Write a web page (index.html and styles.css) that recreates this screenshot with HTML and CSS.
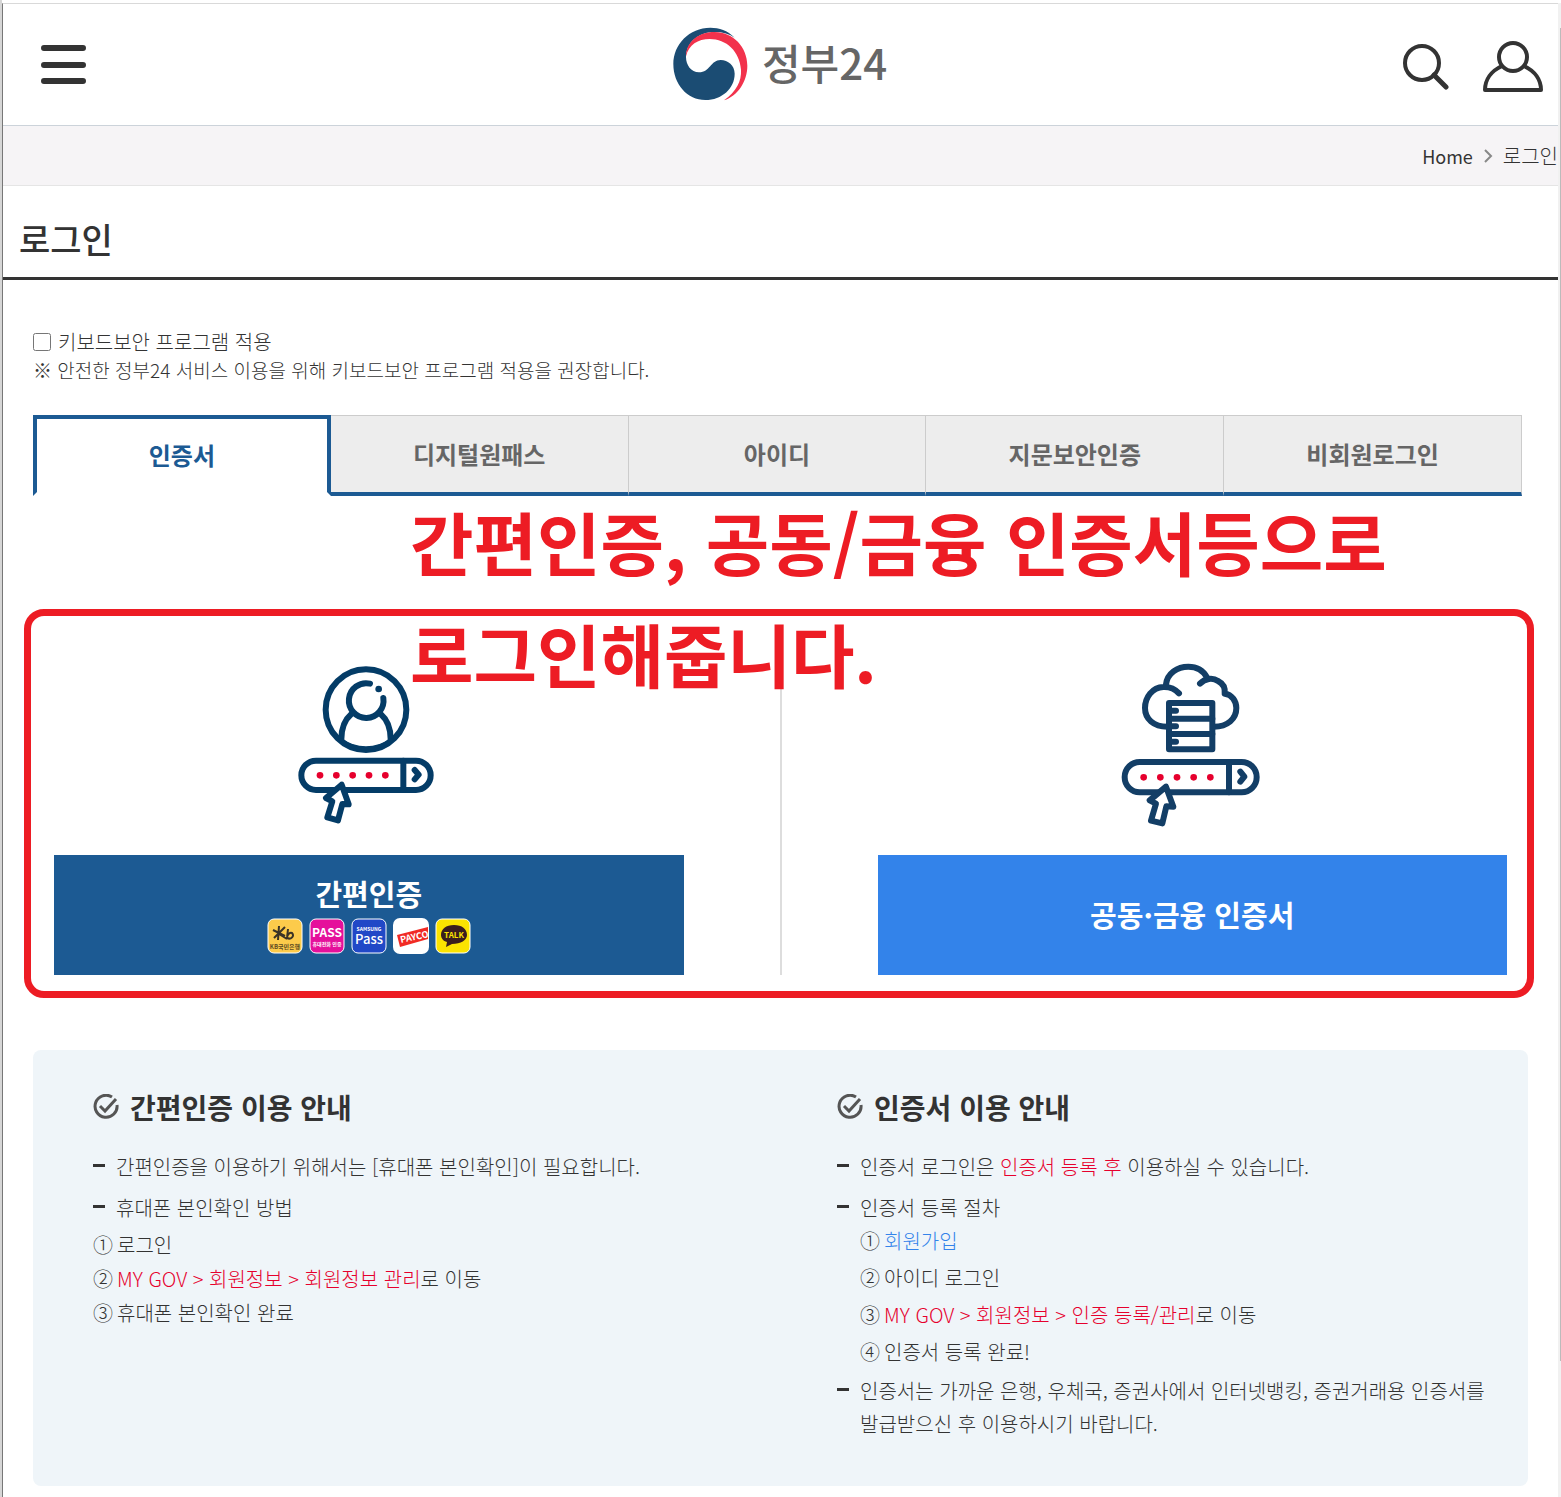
FILE: index.html
```html
<!DOCTYPE html>
<html lang="ko">
  <head>
    <meta charset="UTF-8" />
    <meta name="viewport" content="width=device-width, initial-scale=1.0" />
    <title>로그인 | 정부24</title>
    <link rel="stylesheet" href="styles.css">
  </head>
  <body>
    <div class="window">
      <div class="page">
        <header class="header">
          <button class="icon-button menu-button" type="button" aria-label="전체메뉴">
            <svg width="46" height="40" viewBox="0 0 46 40">
              <path d="M3 3H42M3 20H42M3 36H42" stroke="#333" stroke-width="6" stroke-linecap="round" />
            </svg>
          </button>
          <a class="logo" href="#">
            <svg width="75" height="74" viewBox="65 52 225 222">
              <path fill="#1b4c73" d="M250 84C228 62 204 54 177 54C114 54 66 104 66 163C66 224 108 271 162 271C212 271 250 236 250 192C250 167 230 151 208 151C178 151 176 188 143 188C119 188 104 166 104 143C104 100 140 67 190 67C215 67 235 73 250 84Z" />
              <path fill="#f2324c" d="M104 140C104 98 140 67 190 67C245 67 288 112 288 168C288 215 260 258 218 272C255 245 271 215 269 180C265 125 225 88 175 88C140 88 112 105 104 140Z" />
            </svg>
            <span class="logo-text">정부24</span>
          </a>
          <div class="header-tools">
            <button class="icon-button" type="button" aria-label="검색">
              <svg width="46" height="48" viewBox="0 0 46 48" fill="none" stroke="#333">
                <circle cx="19" cy="20" r="17" stroke-width="4" />
                <path d="M31 32L43 44" stroke-width="5" stroke-linecap="round" />
              </svg>
            </button>
            <button class="icon-button" type="button" aria-label="로그인">
              <svg width="60" height="52" viewBox="0 0 60 52" fill="none" stroke="#333" stroke-width="4" stroke-linejoin="round">
                <circle cx="30" cy="16" r="14" />
                <path d="M19 25C8 30 2 39 2 49H58C58 39 52 30 41 25" />
              </svg>
            </button>
          </div>
        </header>
        <nav class="breadcrumb">
          <a class="home" href="#">Home</a>
          <svg width="10" height="14" viewBox="0 0 10 14" fill="none" stroke="#888" stroke-width="2">
            <path d="M2 1L8 7L2 13" />
          </svg>
          <span>로그인</span>
        </nav>
        <h1 class="title">로그인</h1>

        <main class="content">
          <div class="security">
            <input class="checkbox" type="checkbox" id="keyboard-security" />
            <label for="keyboard-security">키보드보안 프로그램 적용</label>
          </div>
          <p class="security-note">※ 안전한 정부24 서비스 이용을 위해 키보드보안 프로그램 적용을 권장합니다.</p>

          <div class="tabs" role="tablist">
            <button class="tab active" type="button" role="tab" aria-selected="true">인증서</button>
            <button class="tab" type="button" role="tab">디지털원패스</button>
            <button class="tab" type="button" role="tab">아이디</button>
            <button class="tab" type="button" role="tab">지문보안인증</button>
            <button class="tab" type="button" role="tab">비회원로그인</button>
          </div>

          <section class="methods">
            <div class="method">
              <svg width="170" height="190" viewBox="12 0 510 570" fill="none" stroke="#043c67" stroke-width="18" stroke-linecap="round" stroke-linejoin="round">
                <circle cx="258" cy="179" r="121" />
                <path d="M270 101A52 52 0 1 0 310 144" />
                <circle cx="296" cy="117" r="10" fill="#043c67" stroke="none" />
                <path d="M214 192C192 211 184 236 184 268M302 192C324 211 332 236 332 268" />
                <path d="M184 270C225 303 291 303 332 270" stroke-width="12" />
                <rect x="64" y="332" width="388" height="88" rx="44" />
                <path d="M370 332V420M404 360L416 374L404 388" />
                <g fill="#e6002d" stroke="none">
                  <circle cx="120" cy="376" r="10" />
                  <circle cx="169" cy="376" r="10" />
                  <circle cx="218" cy="376" r="10" />
                  <circle cx="267" cy="376" r="10" />
                  <circle cx="316" cy="376" r="10" />
                </g>
                <path fill="#fff" stroke-width="18" d="M185 404L138 444L157 454L142 502L174 511L187 462L206 463Z" />
              </svg>
              <button class="method-button simple" type="button">
                <span>간편인증</span>
                <span class="badges">
                  <svg width="36" height="36" viewBox="0 0 36 36">
                    <rect x="1" y="1" width="34" height="34" rx="6" fill="#fccb4b" stroke="#fff" />
                    <path d="M12 8L11 22M6 12L18 18M18 9L7 20M12 16L20 21M21 11L20 20C24 22 28 18 25 15C23 14 21 16 20 19" fill="none" stroke="#3b3426" stroke-width="2" />
                    <text x="18" y="31" font-size="6" font-weight="700" fill="#5c4a22" text-anchor="middle">KB국민은행</text>
                  </svg>
                  <svg width="36" height="36" viewBox="0 0 36 36">
                    <rect x="1" y="1" width="34" height="34" rx="6" fill="#e5109b" stroke="#fff" />
                    <text x="18" y="19" font-size="12" font-weight="700" fill="#fff" text-anchor="middle">PASS</text>
                    <text x="18" y="28" font-size="5" font-weight="700" fill="#fff" text-anchor="middle">휴대전화 인증</text>
                  </svg>
                  <svg width="36" height="36" viewBox="0 0 36 36">
                    <rect x="1" y="1" width="34" height="34" rx="6" fill="#2148c7" stroke="#fff" />
                    <text x="18" y="13" font-size="5" font-weight="700" fill="#fff" text-anchor="middle">SAMSUNG</text>
                    <text x="18" y="26" font-size="13" font-weight="500" fill="#fff" text-anchor="middle">Pass</text>
                  </svg>
                  <svg width="36" height="36" viewBox="0 0 36 36">
                    <rect width="36" height="36" rx="7" fill="#fff" />
                    <path d="M4 17L35 9V21L7 29Z" fill="#f12a24" />
                    <text x="8" y="25" font-size="9" font-weight="700" fill="#fff" transform="rotate(-12 8 25)">PAYCO</text>
                  </svg>
                  <svg width="36" height="36" viewBox="0 0 36 36">
                    <rect x="1" y="1" width="34" height="34" rx="6" fill="#fbe300" stroke="#fff" />
                    <path d="M19 7C11 7 6 11 6 17C6 20 8 23 12 24L11 29L17 26C26 26 32 22 32 17C32 11 27 7 19 7Z" fill="#3a1d1e" />
                    <text x="19" y="20" font-size="8" font-weight="700" fill="#fbe300" text-anchor="middle">TALK</text>
                  </svg>
                </span>
              </button>
            </div>
            <div class="divider"></div>
            <div class="method">
              <svg width="180" height="190" viewBox="6 0 540 570" fill="none" stroke="#133e66" stroke-width="18" stroke-linecap="round" stroke-linejoin="round">
                <path d="M237 130C222 114 207 110 190 111C157 112 135 142 135 174C135 206 160 231 205 230M198 103C202 70 232 50 265 50C290 50 310 62 321 82M300 101C315 85 338 82 354 93C370 101 376 115 374 131C396 133 409 154 409 174C409 207 382 230 342 230" />
                <rect x="207" y="159" width="130" height="139" />
                <path d="M207 206H337M207 252H337M214 182H228M214 229H228M214 275H228" />
                <rect x="74" y="336" width="396" height="91" rx="45" />
                <path d="M387 336V427M421 365L433 380L421 395" />
                <g fill="#e6002d" stroke="none">
                  <circle cx="131" cy="382" r="10" />
                  <circle cx="181" cy="382" r="10" />
                  <circle cx="231" cy="382" r="10" />
                  <circle cx="281" cy="382" r="10" />
                  <circle cx="331" cy="382" r="10" />
                </g>
                <path fill="#fff" stroke-width="18" d="M198 410L149 451L168 461L153 512L187 520L199 469L220 470Z" />
              </svg>
              <button class="method-button joint" type="button">공동·금융 인증서</button>
            </div>
            <div class="highlight"></div>
            <p class="annotation">간편인증, 공동/금융 인증서등으로<br />로그인해줍니다.</p>
          </section>

          <section class="guide">
            <div class="guide-column">
              <h2 class="guide-title">
                <svg width="26" height="26" viewBox="0 0 26 26" fill="none" stroke="#555" stroke-width="3">
                  <path d="M19 3A11 11 0 1 0 24 11M7 12L12 17L23 5" />
                </svg>
                간편인증 이용 안내
              </h2>
              <ul class="guide-list">
                <li>간편인증을 이용하기 위해서는 [휴대폰 본인확인]이 필요합니다.</li>
                <li>휴대폰 본인확인 방법</li>
              </ul>
              <ol class="steps">
                <li><span>①</span><div>로그인</div></li>
                <li><span>②</span><div><em>MY GOV &gt; 회원정보 &gt; 회원정보 관리</em>로 이동</div></li>
                <li><span>③</span><div>휴대폰 본인확인 완료</div></li>
              </ol>
            </div>
            <div class="guide-column">
              <h2 class="guide-title">
                <svg width="26" height="26" viewBox="0 0 26 26" fill="none" stroke="#555" stroke-width="3">
                  <path d="M19 3A11 11 0 1 0 24 11M7 12L12 17L23 5" />
                </svg>
                인증서 이용 안내
              </h2>
              <ul class="guide-list">
                <li>인증서 로그인은 <em>인증서 등록 후</em> 이용하실 수 있습니다.</li>
                <li>
                  인증서 등록 절차
                  <ol class="steps nested">
                    <li><span>①</span><a href="#">회원가입</a></li>
                    <li><span>②</span><div>아이디 로그인</div></li>
                    <li><span>③</span><div><em>MY GOV &gt; 회원정보 &gt; 인증 등록/관리</em>로 이동</div></li>
                    <li><span>④</span><div>인증서 등록 완료!</div></li>
                  </ol>
                </li>
                <li>인증서는 가까운 은행, 우체국, 증권사에서 인터넷뱅킹, 증권거래용 인증서를 발급받으신 후 이용하시기 바랍니다.</li>
              </ul>
            </div>
          </section>
        </main>
      </div>
      <div class="scrollbar"><div class="thumb"></div></div>
    </div>
  </body>
</html>
```
FILE: styles.css
```css
* {
  box-sizing: border-box;
}
body {
  margin: 0;
  background-color: #fff;
  color: #333;
  font-family: "Noto Sans CJK KR", sans-serif;
  font-size: 20px;
  font-weight: 300;
  line-height: 28px;
  word-break: keep-all;
}
h1,
h2,
p,
ul,
ol {
  margin: 0;
  padding: 0;
}
ul,
ol {
  list-style: none;
}
a {
  color: inherit;
  text-decoration: none;
}
button {
  padding: 0;
  border: 0;
  font-family: inherit;
  cursor: pointer;
}
svg {
  display: block;
}
em {
  color: #e6002d;
  font-style: normal;
}
.window {
  display: flex;
  min-height: 100vh;
  padding-top: 3px;
  border-left: 2px solid #d6d6d6;
}
.page {
  flex: 1;
  min-width: 0;
  border-top: 1px solid #d9d9d9;
  border-left: 1px solid #777;
}
.scrollbar {
  width: 3px;
  padding: 25px 0 136px 2px;
  background-color: #f1f1f1;
}
.thumb {
  height: 100%;
  background-color: #bbb;
}

/* header */
.header {
  display: grid;
  grid-template-columns: 1fr auto 1fr;
  align-items: center;
  height: 122px;
  padding: 0 15px 0 38px;
  border-bottom: 1px solid #ccd3da;
}
.icon-button {
  background: none;
}
.menu-button {
  justify-self: start;
}
.logo {
  display: flex;
  align-items: center;
  gap: 14px;
  margin-right: 24px;
  padding-bottom: 2px;
}
.logo-text {
  padding-bottom: 4px;
  color: #666;
  font-size: 42px;
  font-weight: 500;
  line-height: 60px;
}
.header-tools {
  display: flex;
  justify-content: flex-end;
  align-items: center;
  gap: 34px;
  padding-top: 4px;
}
.breadcrumb {
  display: flex;
  justify-content: flex-end;
  align-items: center;
  gap: 10px;
  height: 60px;
  border-bottom: 1px solid #e5e5e5;
  background-color: #f6f4f6;
}
.home {
  font-size: 18px;
  font-weight: 400;
}
.title {
  padding: 28px 16px 13px;
  border-bottom: 3px solid #333;
  font-size: 34px;
  font-weight: 500;
  line-height: 50px;
}

/* content */
.content {
  padding: 48px 30px 11px;
}
.security {
  display: flex;
  align-items: center;
  gap: 7px;
}
.checkbox {
  width: 18px;
  height: 18px;
  margin: 0;
}
.security-note {
  font-size: 19px;
}
.tabs {
  display: flex;
  margin: 31px 6px 0 0;
}
.tab {
  width: 20%;
  height: 81px;
  padding-bottom: 2px;
  border-top: 1px solid #ccc;
  border-right: 1px solid #ccc;
  border-bottom: 4px solid #1c5a93;
  background-color: #ededed;
  color: #666;
  font-size: 24px;
  font-weight: 700;
}
.tab.active {
  border: 4px solid #1c5a93;
  border-bottom-color: transparent;
  background-color: #fff;
  color: #1c5a93;
}
.methods {
  position: relative;
  display: flex;
  gap: 96px;
  padding: 154px 21px 0;
}
.method {
  flex: 1;
  display: flex;
  flex-direction: column;
  align-items: center;
  gap: 15px;
}
.method-button {
  display: flex;
  flex-direction: column;
  align-items: center;
  justify-content: center;
  gap: 6px;
  width: 100%;
  height: 120px;
  padding-bottom: 2px;
  color: #fff;
  font-size: 29px;
  font-weight: 700;
  line-height: 38px;
}
.simple {
  background-color: #1c5a93;
}
.joint {
  background-color: #3383ea;
}
.badges {
  display: flex;
  gap: 6px;
}
.divider {
  width: 2px;
  background-color: #ddd;
}

/* red marks over the login methods */
.highlight {
  position: absolute;
  top: 113px;
  right: -6px;
  bottom: -23px;
  left: -9px;
  border: 7px solid #ed1c24;
  border-radius: 20px;
  pointer-events: none;
}
.annotation {
  position: absolute;
  top: -11px;
  left: 377px;
  color: #ed1c24;
  font-size: 69px;
  font-weight: 700;
  line-height: 112px;
  white-space: nowrap;
  pointer-events: none;
}

/* guide */
.guide {
  display: grid;
  grid-template-columns: 14fr 13fr;
  margin-top: 75px;
  padding: 37px 0 46px 60px;
  border-radius: 8px;
  background-color: #eff5f9;
}
.guide-title {
  display: flex;
  align-items: center;
  gap: 11px;
  margin-bottom: 23px;
  font-size: 28px;
  font-weight: 700;
  line-height: 40px;
}
.guide-list > li {
  position: relative;
  padding-left: 23px;
  line-height: 33px;
}
.guide-list > li:first-child {
  margin-bottom: 8px;
}
.guide-list > li::before {
  content: "";
  position: absolute;
  top: 14px;
  left: 0;
  width: 12px;
  height: 3px;
  background-color: #333;
}
.steps {
  margin-top: 4px;
}
.steps li {
  display: flex;
  gap: 4px;
  line-height: 34px;
}
.steps a {
  color: #3383ea;
}
.nested {
  margin-top: 0;
  padding-bottom: 2px;
}
.nested li {
  margin-bottom: 4px;
  line-height: 33px;
}
```
